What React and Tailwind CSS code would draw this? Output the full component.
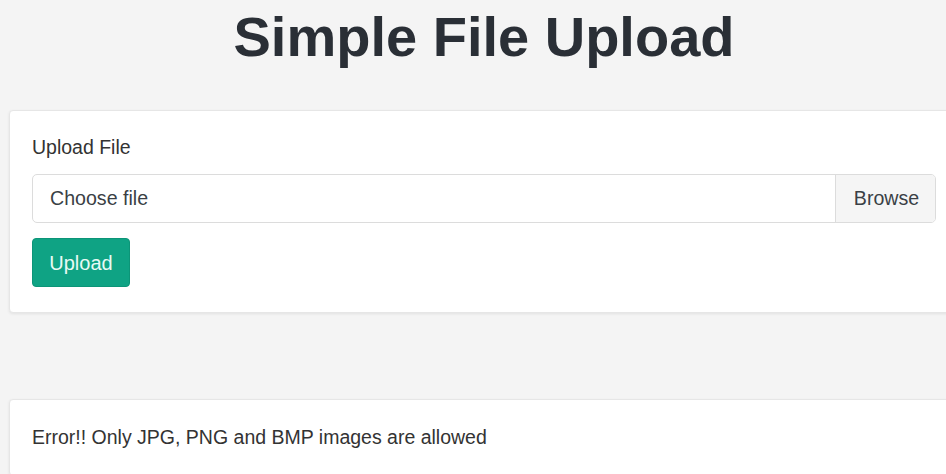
import React from 'react';

const App = () => {
  return (
    <div className="min-h-screen w-full overflow-hidden bg-[#f4f4f4] font-['Liberation_Sans',Arial,sans-serif] text-[#333]">
      <div className="ml-[9px] w-[950px] shrink-0">
        <h1 className="flex h-[74px] items-center justify-center text-[56px] font-bold text-[#2a2f36]">
          Simple File Upload
        </h1>

        <div className="mt-[36px] rounded-[4px] border border-[#e6e6e6] bg-white px-[22px] pt-[23px] pb-[25px] shadow-[0_1px_3px_rgba(0,0,0,0.08)]">
          <label className="block text-[19.5px] leading-[27px] text-[#333]">Upload File</label>
          <div className="mt-[13px] flex h-[49px] overflow-hidden rounded-[5px] border border-[#dcdcdc]">
            <div className="flex flex-1 items-center px-[17px] text-[19.6px] text-[#3a3f45]">Choose file</div>
            <div className="flex w-[100px] items-center justify-center border-l border-[#dcdcdc] bg-[#f5f5f5] pl-[2px] text-[19.6px] text-[#3a3f45]">
              Browse
            </div>
          </div>
          <button className="mt-[15px] flex h-[49px] w-[98px] items-center justify-center rounded-[4px] border border-[#0c9578] bg-[#0fa384] text-[20px] text-[#e8faf5]">
            Upload
          </button>
        </div>

        <div className="mt-[86px] rounded-[4px] border border-[#e6e6e6] bg-white px-[22px] pt-[24px] pb-[24px] shadow-[0_1px_3px_rgba(0,0,0,0.08)]">
          <p className="text-[19.5px] leading-[27px] text-[#333]">Error!! Only JPG, PNG and BMP images are allowed</p>
        </div>
      </div>
    </div>
  );
};

export default App;
